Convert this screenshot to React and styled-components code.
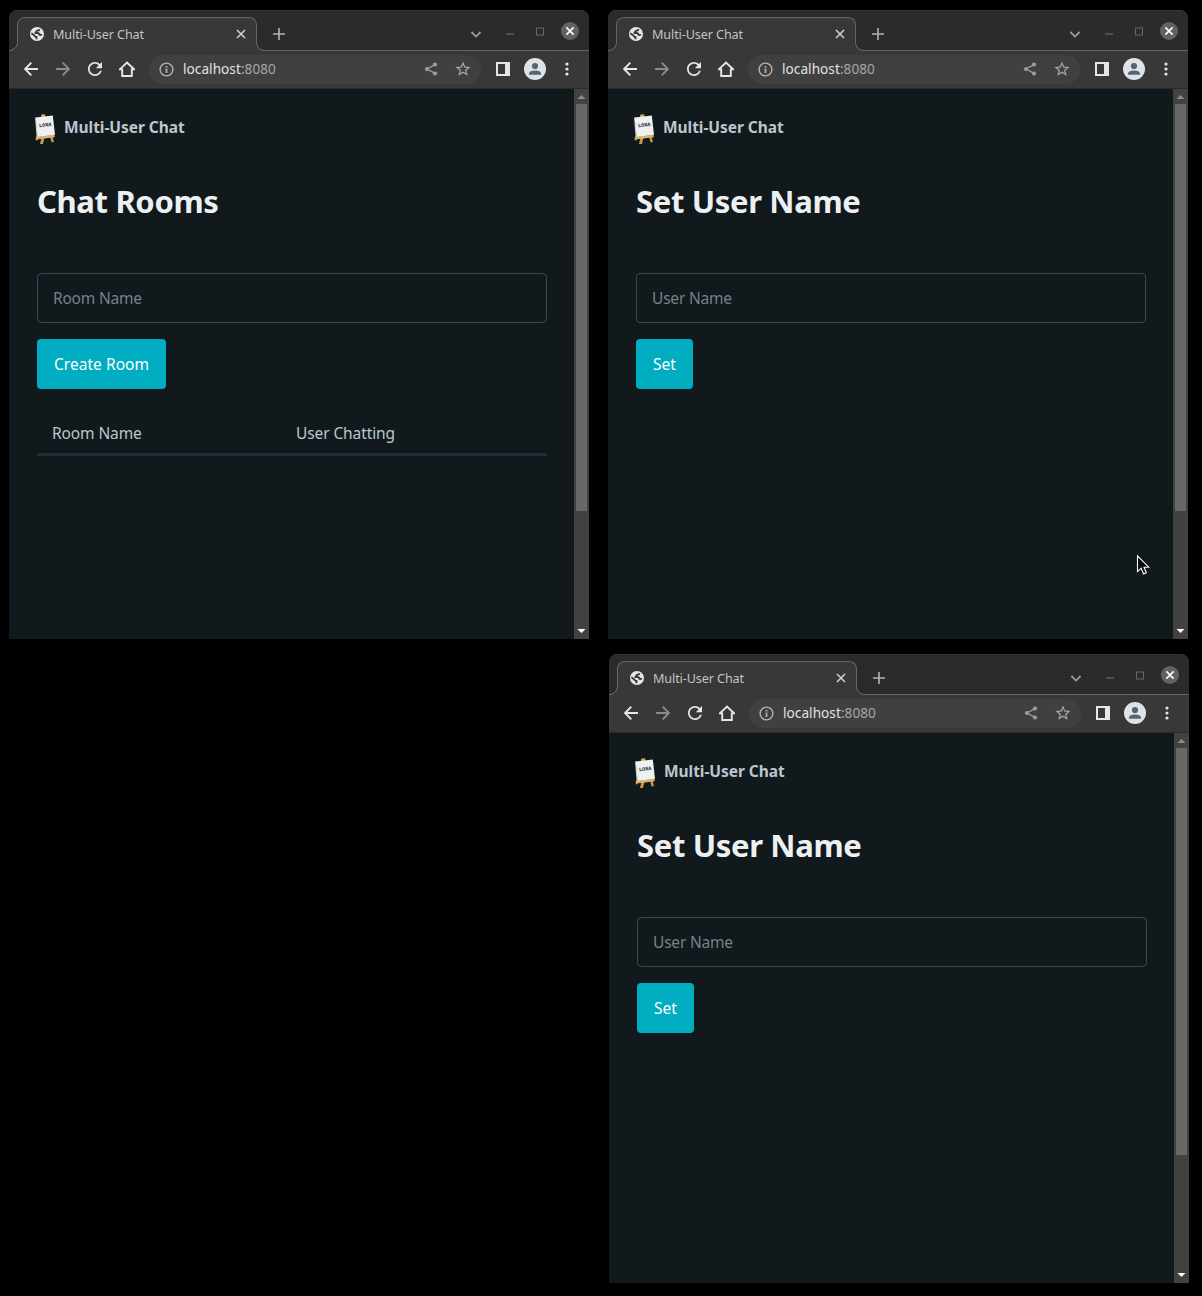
import React from "react";
import styled, { createGlobalStyle, css } from "styled-components";

const c = {
  strip: "#2b2b2b",
  toolbar: "#383838",
  line: "#666666",
  omnibox: "#404040",
  page: "#11191c",
  icon: "#e6e6e6",
  dim: "#8a8a8a",
  soft: "#b4b4b4",
};

const GlobalStyle = createGlobalStyle`
  * { box-sizing: border-box; }
  body {
    margin: 0;
    background: #000;
    font-family: "Noto Sans", "Open Sans", sans-serif;
  }
  svg { display: block; flex: none; }
`;

const Desktop = styled.main`
  position: relative;
  width: 1202px;
  height: 1296px;
  background: #000;
  overflow: hidden;
`;

const Window = styled.section`
  position: absolute;
  left: ${(p) => p.$x}px;
  top: ${(p) => p.$y}px;
  width: 580px;
  height: 629px;
  display: flex;
  flex-direction: column;
  border-radius: 8px 8px 0 0;
  overflow: hidden;
  background: ${c.page};
`;

const TabStrip = styled.header`
  height: 41px;
  flex: none;
  display: flex;
  align-items: flex-end;
  padding-left: 8px;
  background: ${c.strip};
  box-shadow: inset 0 -1px ${c.line}, inset 0 1px #363636;
`;

const foot = css`
  content: "";
  position: absolute;
  bottom: 0;
  width: 9px;
  height: 9px;
`;

const Tab = styled.div`
  position: relative;
  width: 240px;
  height: 34px;
  display: flex;
  align-items: center;
  padding: 0 8px 1px 12px;
  border: 1px solid ${c.line};
  border-bottom: 0;
  border-radius: 8px 8px 0 0;
  background: ${c.toolbar};
  &::before {
    ${foot}
    left: -9px;
    background: radial-gradient(circle at 0 0, ${c.strip} 7.8px, ${c.line} 8.2px, ${c.line} 8.8px, ${c.toolbar} 9.2px);
  }
  &::after {
    ${foot}
    right: -9px;
    background: radial-gradient(circle at 100% 0, ${c.strip} 7.8px, ${c.line} 8.2px, ${c.line} 8.8px, ${c.toolbar} 9.2px);
  }
`;

const TabTitle = styled.span`
  flex: 1;
  margin-left: 9px;
  padding-top: 1px;
  font-size: 12.6px;
  line-height: 18px;
  letter-spacing: -0.1px;
  color: #c4c4c4;
`;

const NewTab = styled.div`
  height: 34px;
  margin-left: 15px;
  display: flex;
  align-items: center;
`;

const WindowControls = styled.div`
  height: 41px;
  margin-left: auto;
  padding-right: 10px;
  display: flex;
  align-items: center;
`;

const CloseButton = styled.span`
  width: 18px;
  height: 18px;
  margin-left: 17px;
  display: grid;
  place-items: center;
  border-radius: 50%;
  background: #626262;
`;

const Toolbar = styled.div`
  height: 38px;
  flex: none;
  display: flex;
  align-items: center;
  padding: 0 6px 1px 6px;
  background: ${c.toolbar};
  border-bottom: 1px solid #2a2a2a;
`;

const ToolButton = styled.span`
  width: 32px;
  height: 28px;
  display: grid;
  place-items: center;
`;

const Omnibox = styled.div`
  flex: 1;
  height: 29px;
  margin: 0 6px;
  display: flex;
  align-items: center;
  padding: 0 2px 0 10px;
  border-radius: 15px;
  background: ${c.omnibox};
`;

const Url = styled.span`
  flex: 1;
  margin-left: 9px;
  font-size: 13.6px;
  line-height: 20px;
  letter-spacing: 0.05px;
  color: #e2e2e2;
`;

const Port = styled.span`
  color: #a6a6a6;
`;

const Avatar = styled.span`
  width: 22px;
  height: 22px;
  border-radius: 50%;
  overflow: hidden;
  background: #dee3e8;
`;

const Viewport = styled.div`
  flex: 1;
  display: flex;
`;

const Page = styled.div`
  flex: 1;
  padding: 0 27px 0 28px;
`;

const Nav = styled.nav`
  height: 76px;
  margin-left: -3px;
  display: flex;
  align-items: center;
`;

const Brand = styled.strong`
  margin-left: 8px;
  font-size: 15.5px;
  line-height: 24px;
  font-weight: 700;
  letter-spacing: -0.05px;
  color: #bbc6ce;
`;

const Title = styled.h1`
  height: 40px;
  margin: 16px 0 52px;
  font-size: 31px;
  line-height: 41px;
  font-weight: 700;
  letter-spacing: -0.35px;
  color: #edf0f3;
`;

const Form = styled.form`
  display: flex;
  flex-direction: column;
  align-items: flex-start;
  gap: 16px;
`;

const TextInput = styled.input`
  width: 100%;
  height: 50px;
  padding: 0 15px;
  border: 1px solid #374956;
  border-radius: 4px;
  outline: 0;
  background: transparent;
  color: #bbc6ce;
  font: 400 15.5px/24px "Noto Sans", "Open Sans", sans-serif;
  letter-spacing: -0.2px;
  &::placeholder {
    color: #73828c;
    opacity: 1;
  }
`;

const SubmitButton = styled.button`
  width: ${(p) => p.$width}px;
  height: 50px;
  padding: 0;
  border: 0;
  border-radius: 4px;
  background: #00adc1;
  color: #fff;
  font: 400 15.5px/24px "Noto Sans", "Open Sans", sans-serif;
  letter-spacing: 0.05px;
`;

const TableHead = styled.div`
  height: 43px;
  margin-top: 24px;
  display: grid;
  grid-template-columns: 244px 1fr;
  align-items: center;
  border-bottom: 3px solid #202d35;
`;

const HeadCell = styled.span`
  padding: 0 15px;
  font-size: 15.5px;
  line-height: 24px;
  letter-spacing: -0.1px;
  color: #bbc6ce;
`;

const Scrollbar = styled.div`
  width: 15px;
  display: flex;
  flex-direction: column;
  align-items: center;
  background: #424242;
`;

const ScrollArrow = styled.span`
  width: 15px;
  height: 15px;
  display: grid;
  place-items: center;
`;

const Thumb = styled.div`
  width: 11px;
  height: 407px;
  margin-bottom: auto;
  background: #686868;
`;

const Pointer = styled.svg`
  position: absolute;
  left: 1136px;
  top: 554px;
`;

const GlobeIcon = () => (
  <svg width="14" height="14" viewBox="0 0 14 14">
    <circle cx="7" cy="7" r="7" fill={c.icon} />
    <path
      d="M9.6 2.2Q9.2 3.7 7.4 3.7Q6.6 3.8 6.5 4.8Q5.4 4.9 5.4 6H8Q9.3 6.3 9.4 7.8Q11 7.6 11.9 8.3M1.4 6.3L4.7 8.9Q5.2 9.9 6.5 10V12.2"
      fill="none"
      stroke={c.toolbar}
      strokeWidth="1.8"
    />
  </svg>
);

const TabCloseIcon = () => (
  <svg width="14" height="14" viewBox="0 0 14 14">
    <path d="M3 3L11 11M11 3L3 11" stroke="#d0d0d0" strokeWidth="1.6" />
  </svg>
);

const PlusIcon = () => (
  <svg width="14" height="14" viewBox="0 0 14 14">
    <path d="M7 1V13M1 7H13" stroke={c.soft} strokeWidth="1.6" />
  </svg>
);

const ControlIcons = () => (
  <svg width="76" height="20" viewBox="0 0 76 20">
    <path d="M3.4 11L8 15.6L12.6 11" fill="none" stroke="#999" strokeWidth="1.8" />
    <path d="M38 13H46" stroke="#747474" />
    <rect x="68.5" y="7" width="7" height="7" fill="none" stroke="#686868" />
  </svg>
);

const WindowCloseIcon = () => (
  <svg width="10" height="10" viewBox="0 0 10 10">
    <path d="M1.4 1.4L8.6 8.6M8.6 1.4L1.4 8.6" stroke="#fff" strokeWidth="1.6" />
  </svg>
);

const ArrowIcon = ({ color, flip }) => (
  <svg width="14" height="14" viewBox="0 0 14 14">
    <path
      d="M14 7H1.4M7.3 0.7L1.1 7L7.3 13.3"
      fill="none"
      stroke={color}
      strokeWidth="1.9"
      transform={flip ? "matrix(-1 0 0 1 14 0)" : undefined}
    />
  </svg>
);

const ReloadIcon = () => (
  <svg width="14" height="14" viewBox="4 4 16 16">
    <path
      fill={c.icon}
      d="M17.65 6.35C16.2 4.9 14.21 4 12 4c-4.42 0-7.99 3.58-7.99 8s3.57 8 7.99 8c3.73 0 6.84-2.55 7.73-6h-2.08c-.82 2.33-3.04 4-5.65 4-3.31 0-6-2.69-6-6s2.69-6 6-6c1.66 0 3.14.69 4.22 1.78L13 11h7V4l-2.35 2.35z"
    />
  </svg>
);

const HomeIcon = () => (
  <svg width="16" height="16" viewBox="0 0 16 16">
    <path d="M0.8 8.4L8 1.5L15.2 8.4H12.8V15H3.2V8.4Z" fill="none" stroke={c.icon} strokeWidth="1.9" />
  </svg>
);

const InfoIcon = () => (
  <svg width="15" height="15" viewBox="0 0 15 15">
    <circle cx="7.5" cy="7.5" r="6.4" fill="none" stroke={c.soft} strokeWidth="1.4" />
    <path d="M7.5 6.6V11M7.5 3.9V5.4" stroke={c.soft} strokeWidth="1.7" />
  </svg>
);

const ShareIcon = () => (
  <svg width="14" height="14" viewBox="0 0 14 14">
    <path d="M11 2.6L3 7L11 11.4" fill="none" stroke="#9c9c9c" strokeWidth="1.3" />
    <circle cx="11" cy="2.5" r="2.1" fill="#9c9c9c" />
    <circle cx="3" cy="7" r="2.1" fill="#9c9c9c" />
    <circle cx="11" cy="11.5" r="2.1" fill="#9c9c9c" />
  </svg>
);

const StarIcon = () => (
  <svg width="18" height="18" viewBox="0 0 24 24">
    <path
      fill="#a8a8a8"
      d="M22 9.24l-7.19-.62L12 2 9.19 8.63 2 9.24l5.46 4.73L5.82 21 12 17.27 18.18 21l-1.63-7.03L22 9.24zM12 15.4l-3.76 2.27 1-4.28-3.32-2.88 4.38-.38L12 6.1l1.71 4.04 4.38.38-3.32 2.88 1 4.28L12 15.4z"
    />
  </svg>
);

const PanelIcon = () => (
  <svg width="14" height="14" viewBox="0 0 14 14">
    <path fill={c.icon} fillRule="evenodd" d="M0 0H14V14H0ZM2 2V12H9V2Z" />
  </svg>
);

const PersonIcon = () => (
  <svg width="22" height="22" viewBox="0 0 22 22">
    <circle cx="11" cy="8" r="3.1" fill="#566573" />
    <path d="M5 16.8V15.4Q5.4 12.5 11 12.4Q16.6 12.5 17 15.4V16.8Z" fill="#566573" />
  </svg>
);

const MenuIcon = () => (
  <svg width="4" height="14" viewBox="0 0 4 14">
    <circle cx="2" cy="2" r="1.6" fill={c.icon} />
    <circle cx="2" cy="7" r="1.6" fill={c.icon} />
    <circle cx="2" cy="12" r="1.6" fill={c.icon} />
  </svg>
);

const EaselLogo = () => (
  <svg width="22" height="34" viewBox="34 111 22 34">
    <path d="M41 117L41.4 114.6L45 114.3L45.5 117Z" fill="#d9a55a" />
    <path d="M36 136L38.5 137L37.4 140.6L35.5 140ZM41.6 137L44.6 137L43 144L40 144ZM50 136.5L52.4 136L54 142L51.6 142.6Z" fill="#c9964e" />
    <path d="M36 137L54.4 134.8L54.8 137.2L36.4 139.4Z" fill="#e2b167" />
    <path d="M35 117.6L36.2 117.4L38 137L36.5 136.5Z" fill="#b9bcc0" />
    <path d="M35.6 117.4L52.8 115.4L55 134.8L37.6 137Z" fill="#eef0f2" />
    <text
      x="45.2"
      y="126.6"
      textAnchor="middle"
      transform="rotate(-7 45.2 125)"
      fontFamily="Liberation Mono, monospace"
      fontWeight="700"
      fontSize="5.2"
      fill="#2b2d30"
    >
      LONA
    </text>
  </svg>
);

const LogoSlot = styled.span`
  padding-top: 2px;
`;

const Triangle = ({ down }) => (
  <svg width="9" height="5" viewBox="0 0 9 5">
    {down ? <path d="M0.5 0H8.5L4.5 4Z" fill="#fff" /> : <path d="M0.5 5H8.5L4.5 1Z" fill="#8c8c8c" />}
  </svg>
);

function Browser({ x, y, title, field, action, actionWidth, columns }) {
  return (
    <Window $x={x} $y={y}>
      <TabStrip>
        <Tab>
          <GlobeIcon />
          <TabTitle>Multi-User Chat</TabTitle>
          <TabCloseIcon />
        </Tab>
        <NewTab>
          <PlusIcon />
        </NewTab>
        <WindowControls>
          <ControlIcons />
          <CloseButton>
            <WindowCloseIcon />
          </CloseButton>
        </WindowControls>
      </TabStrip>
      <Toolbar>
        <ToolButton><ArrowIcon color={c.icon} /></ToolButton>
        <ToolButton><ArrowIcon color={c.dim} flip /></ToolButton>
        <ToolButton><ReloadIcon /></ToolButton>
        <ToolButton><HomeIcon /></ToolButton>
        <Omnibox>
          <InfoIcon />
          <Url>localhost<Port>:8080</Port></Url>
          <ToolButton><ShareIcon /></ToolButton>
          <ToolButton><StarIcon /></ToolButton>
        </Omnibox>
        <ToolButton><PanelIcon /></ToolButton>
        <ToolButton>
          <Avatar><PersonIcon /></Avatar>
        </ToolButton>
        <ToolButton><MenuIcon /></ToolButton>
      </Toolbar>
      <Viewport>
        <Page>
          <Nav>
            <LogoSlot><EaselLogo /></LogoSlot>
            <Brand>Multi-User Chat</Brand>
          </Nav>
          <Title>{title}</Title>
          <Form>
            <TextInput placeholder={field} />
            <SubmitButton type="button" $width={actionWidth}>{action}</SubmitButton>
          </Form>
          {columns && (
            <TableHead>
              {columns.map((name) => (
                <HeadCell key={name}>{name}</HeadCell>
              ))}
            </TableHead>
          )}
        </Page>
        <Scrollbar>
          <ScrollArrow><Triangle /></ScrollArrow>
          <Thumb />
          <ScrollArrow><Triangle down /></ScrollArrow>
        </Scrollbar>
      </Viewport>
    </Window>
  );
}

export default function App() {
  return (
    <Desktop>
      <GlobalStyle />
      <Browser
        x={9}
        y={10}
        title="Chat Rooms"
        field="Room Name"
        action="Create Room"
        actionWidth={129}
        columns={["Room Name", "User Chatting"]}
      />
      <Browser x={608} y={10} title="Set User Name" field="User Name" action="Set" actionWidth={57} />
      <Browser x={609} y={654} title="Set User Name" field="User Name" action="Set" actionWidth={57} />
      <Pointer width="14" height="22" viewBox="0 0 14 22">
        <path
          d="M1.5 1.8V17.6L5.2 14.2L7.6 20L10.4 18.8L8 13.2H12.8Z"
          fill="#0a0a0a"
          stroke="#fff"
          strokeWidth="1.1"
        />
      </Pointer>
    </Desktop>
  );
}
